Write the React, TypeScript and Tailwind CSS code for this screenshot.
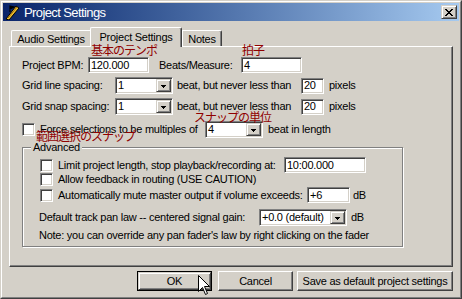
import React from "react";

const sunk =
  "bg-white border border-t-[#808080] border-l-[#808080] border-r-white border-b-white shadow-[inset_1px_1px_0_#404040,inset_-1px_-1px_0_#d4d0c8]";
const raised =
  "bg-[#d4d0c8] border border-t-[#d4d0c8] border-l-[#d4d0c8] border-r-[#404040] border-b-[#404040] shadow-[inset_1px_1px_0_#ffffff,inset_-1px_-1px_0_#808080]";

function TextField({ className, value }: { className: string; value: string }) {
  return (
    <div
      className={`${sunk} ${className} h-[16px] shrink-0 flex items-center pl-[2px] leading-none whitespace-nowrap overflow-hidden`}
    >
      {value}
    </div>
  );
}

function Arrow() {
  return (
    <svg width="5" height="3" viewBox="0 0 5 3" shapeRendering="crispEdges">
      <path d="M0 0h5v1H0zM1 1h3v1H1zM2 2h1v1H2z" fill="#000" />
    </svg>
  );
}

function Combo({ className, value }: { className: string; value: string }) {
  return (
    <div className={`${sunk} ${className} h-[17px] shrink-0 p-[1px] flex items-stretch`}>
      <div className="flex-1 flex items-center pl-[1px] leading-none whitespace-nowrap overflow-hidden">
        {value}
      </div>
      <div className={`${raised} w-[15px] flex items-end justify-center pb-[3px]`}>
        <Arrow />
      </div>
    </div>
  );
}

function Check() {
  return <div className={`${sunk} w-[13px] h-[13px] shrink-0`} />;
}

function Note({ className, children }: { className: string; children: React.ReactNode }) {
  return (
    <div
      className={`absolute z-20 font-['Noto_Sans_CJK_JP',sans-serif] text-[12px] leading-[12px] tracking-[-1px] text-[#900000] whitespace-nowrap ${className}`}
    >
      {children}
    </div>
  );
}

export default function App() {
  return (
    <div className="relative w-[462px] h-[299px] overflow-hidden bg-[#d4d0c8] font-['Liberation_Sans',Arial,sans-serif] text-[11px] tracking-[-0.25px] text-black">
      <div className="h-full border border-t-[#d4d0c8] border-l-[#d4d0c8] border-r-[#404040] border-b-[#404040]">
        <div className="h-full border border-t-white border-l-white border-r-[#808080] border-b-[#808080] p-[1px] flex flex-col">
          {/* Title bar */}
          <div className="h-[18px] shrink-0 flex items-center bg-linear-to-r from-[#0a246a] to-[#a6caf0] pl-[1px] pr-[2px]">
            <svg width="16" height="16" viewBox="0 0 16 16" className="shrink-0">
              <path d="M2 15 L12 2 L15 4 L5 16 Z" fill="#f0c030" stroke="#000" strokeWidth="1" />
              <path d="M4 14 L13 3" stroke="#a07010" strokeWidth="1" />
              <path d="M6 2 L6 8 M6 2 L10 3 L6 5 Z" fill="#000" stroke="#000" strokeWidth="1.2" />
            </svg>
            <span className="ml-[4px] text-white text-[13px] tracking-[-0.6px] leading-none">
              Project Settings
            </span>
            <div className="flex-1" />
            <div className={`${raised} w-[16px] h-[14px] flex items-center justify-center`}>
              <svg width="8" height="7" viewBox="0 0 8 7" shapeRendering="crispEdges">
                <path
                  d="M0 0h2v1h1v1h2V1h1V0h2v1H7v1H6v1H5v1h1v1h1v1h1v1H6V6H5V5H3v1H2v1H0V6h1V5h1V4h1V3H2V2H1V1H0z"
                  fill="#000"
                />
              </svg>
            </div>
          </div>

          {/* Tabs */}
          <div className="mt-[6px] h-[19px] shrink-0 ml-[6px] flex items-end">
            <div className="ml-[2px] w-[79px] h-[16px] border-t border-l border-white rounded-tl-[2px] flex items-center justify-center pt-[1px] leading-none">
              Audio Settings
            </div>
            <div className="relative z-10 -mb-[1px] w-[92px] h-[20px] bg-[#d4d0c8] border-t border-l border-white border-r border-r-[#404040] rounded-t-[2px] shadow-[inset_-1px_0_0_#808080] flex items-start justify-center pt-[4px] leading-none">
              Project Settings
            </div>
            <div className="w-[40px] h-[16px] border-t border-l border-white border-r border-r-[#404040] rounded-tr-[2px] shadow-[inset_-1px_0_0_#808080] flex items-center justify-center pt-[1px] leading-none">
              Notes
            </div>
          </div>

          {/* Panel */}
          <div className="mx-[6px] h-[221px] shrink-0 border border-t-white border-l-white border-r-[#404040] border-b-[#404040] shadow-[inset_-1px_-1px_0_#808080] pl-[12px] flex flex-col">
            {/* Row 1 */}
            <div className="mt-[10px] h-[16px] flex items-center">
              <span className="w-[66px] shrink-0 whitespace-nowrap">Project BPM:</span>
              <TextField className="w-[61px]" value="120.000" />
              <span className="ml-[10px] w-[82px] shrink-0 whitespace-nowrap">Beats/Measure:</span>
              <TextField className="w-[61px]" value="4" />
            </div>
            {/* Row 2 */}
            <div className="mt-[4px] h-[17px] flex items-center">
              <span className="w-[93px] shrink-0 whitespace-nowrap">Grid line spacing:</span>
              <Combo className="w-[58px]" value="1" />
              <span className="ml-[4px] w-[124px] shrink-0 whitespace-nowrap">beat, but never less than</span>
              <TextField className="w-[23px]" value="20" />
              <span className="ml-[5px] whitespace-nowrap">pixels</span>
            </div>
            {/* Row 3 */}
            <div className="mt-[4px] h-[17px] flex items-center">
              <span className="w-[93px] shrink-0 whitespace-nowrap">Grid snap spacing:</span>
              <Combo className="w-[58px]" value="1" />
              <span className="ml-[4px] w-[124px] shrink-0 whitespace-nowrap">beat, but never less than</span>
              <TextField className="w-[23px]" value="20" />
              <span className="ml-[5px] whitespace-nowrap">pixels</span>
            </div>
            {/* Row 4 */}
            <div className="mt-[6px] h-[17px] flex items-center">
              <Check />
              <span className="ml-[5px] w-[165px] shrink-0 whitespace-nowrap">
                Force selections to be multiples of
              </span>
              <Combo className="w-[58px]" value="4" />
              <span className="ml-[5px] whitespace-nowrap">beat in length</span>
            </div>

            {/* Advanced group */}
            <div className="relative mt-[9px] w-[381px] h-[100px] border border-[#808080] shadow-[inset_1px_1px_0_#ffffff,1px_1px_0_#ffffff] pl-[17px] flex flex-col">
              <span className="absolute left-[8px] -top-[7px] px-[2px] bg-[#d4d0c8] leading-[12px]">
                Advanced
              </span>
              <div className="mt-[9px] h-[16px] flex items-center">
                <Check />
                <span className="ml-[5px] w-[226px] shrink-0 whitespace-nowrap">
                  Limit project length, stop playback/recording at:
                </span>
                <TextField className="w-[82px]" value="10:00.000" />
              </div>
              <div className="h-[13px] flex items-center">
                <Check />
                <span className="ml-[5px] whitespace-nowrap">Allow feedback in routing (USE CAUTION)</span>
              </div>
              <div className="mt-[1px] h-[16px] flex items-center">
                <Check />
                <span className="ml-[5px] w-[249px] shrink-0 whitespace-nowrap">
                  Automatically mute master output if volume exceeds:
                </span>
                <TextField className="w-[43px]" value="+6" />
                <span className="ml-[3px] whitespace-nowrap">dB</span>
              </div>
              <div className="mt-[6px] h-[17px] -ml-[1px] flex items-center">
                <span className="w-[220px] shrink-0 whitespace-nowrap">
                  Default track pan law -- centered signal gain:
                </span>
                <Combo className="w-[88px]" value="+0.0 (default)" />
                <span className="ml-[4px] whitespace-nowrap">dB</span>
              </div>
              <div className="mt-[3px] h-[12px] -ml-[1px] flex items-center whitespace-nowrap">
                Note: you can override any pan fader's law by right clicking on the fader
              </div>
            </div>
          </div>

          {/* Buttons */}
          <div className="mt-[4px] h-[20px] shrink-0 flex">
            <div className="ml-[134px] w-[75px] h-[20px] border border-black">
              <div className={`${raised} w-full h-full flex items-center justify-center leading-none`}>OK</div>
            </div>
            <div
              className={`ml-[6px] w-[75px] h-[20px] bg-[#d4d0c8] border border-t-white border-l-white border-r-[#404040] border-b-[#404040] shadow-[inset_-1px_-1px_0_#808080] flex items-center justify-center leading-none`}
            >
              Cancel
            </div>
            <div
              className={`ml-[4px] w-[156px] h-[20px] bg-[#d4d0c8] border border-t-white border-l-white border-r-[#404040] border-b-[#404040] shadow-[inset_-1px_-1px_0_#808080] flex items-center justify-center leading-none whitespace-nowrap`}
            >
              Save as default project settings
            </div>
          </div>
        </div>
      </div>

      {/* Annotations */}
      <Note className="left-[91px] top-[44px]">基本のテンポ</Note>
      <Note className="left-[242px] top-[44px]">拍子</Note>
      <Note className="left-[194px] top-[111px]">スナップの単位</Note>
      <Note className="left-[36px] top-[130px]">範囲選択のスナップ</Note>

      {/* Mouse cursor */}
      <svg
        className="absolute left-[198px] top-[275px] z-30"
        width="13"
        height="21"
        viewBox="0 0 13 21"
      >
        <path
          d="M0.5 0.5 L0.5 16.5 L4.5 12.5 L7.5 19.5 L9.5 18.5 L6.5 11.5 L11.5 11.5 Z"
          fill="#fff"
          stroke="#000"
          strokeWidth="1"
        />
      </svg>
    </div>
  );
}
